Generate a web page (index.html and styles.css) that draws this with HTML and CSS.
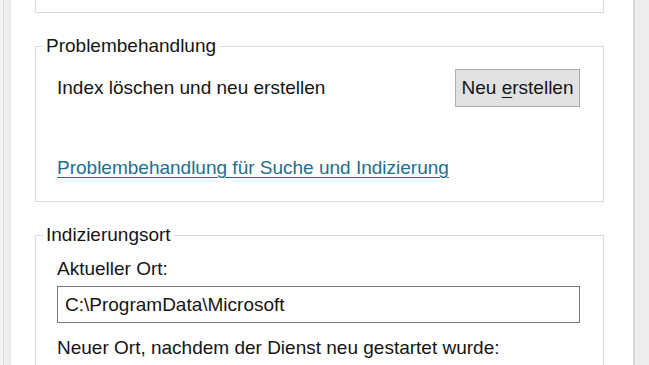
FILE: index.html
```html
<!DOCTYPE html>
<html lang="de">
<head>
  <meta charset="UTF-8">
  <title>Erweiterte Optionen</title>
  <link rel="stylesheet" href="styles.css">
</head>
<body>
  <div class="window">
    <div class="frame-left"></div>

    <main class="panel">
      <!-- oberer Gruppenrahmen, nur unterer Teil sichtbar -->
      <div class="group-top"></div>

      <fieldset class="group">
        <legend>Problembehandlung</legend>
        <div class="row">
          <span>Index löschen und neu erstellen</span>
          <button class="btn">Neu <u>e</u>rstellen</button>
        </div>
        <a class="link" href="#">Problembehandlung für Suche und Indizierung</a>
      </fieldset>

      <fieldset class="group">
        <legend>Indizierungsort</legend>
        <div class="label first">Aktueller Ort:</div>
        <div class="textbox">C:\ProgramData\Microsoft</div>
        <div class="label">Neuer Ort, nachdem der Dienst neu gestartet wurde:</div>
        <div class="textbox"></div>
      </fieldset>
    </main>

    <div class="frame-right"></div>
  </div>
</body>
</html>
```

FILE: styles.css
```css
body {
  margin: 0;
  font-family: "Liberation Sans", Arial, sans-serif;
  font-size: 19px;
  color: #151515;
  background: #fff;
  overflow: hidden;
}

.window {
  display: flex;
  height: 365px;
}

.frame-left {
  width: 11px;
  background: #efefef;
  border-left: 3px solid #f3f3f3;
  box-shadow: inset 1px 0 0 #dadada;
  box-sizing: border-box;
  border-right: 1px solid #e4e4e4;
}

.frame-right {
  flex: 1;
  background: #ededed;
  border-left: 2px solid #d8d8d8;
}

.panel {
  width: 622px;
  padding: 0 29px 0 24px;
  box-sizing: border-box;
  background: #fff;
}

.group-top {
  height: 12px;
  border: 1px solid #dcdcdc;
  border-top: none;
}

.group {
  margin: 23px 0 0;
  padding: 0 23px 22px 21px;
  border: 1px solid #dcdcdc;
  min-width: 0;
}

.group legend {
  margin-left: -14px;
  padding: 0 3px;
  line-height: 20px;
}

.row {
  display: flex;
  justify-content: space-between;
  align-items: center;
  margin-top: 13px;
}

.btn {
  width: 125px;
  height: 38px;
  background: #e1e1e1;
  border: 1px solid #adadad;
  font: inherit;
  color: #151515;
  padding: 0;
}

.btn u {
  text-decoration-thickness: 1px;
  text-underline-offset: 3px;
}

.link {
  display: inline-block;
  margin-top: 50px;
  line-height: 22px;
  color: #1f6e8c;
  text-decoration-thickness: 1px;
  text-underline-offset: 3px;
}

.label {
  line-height: 22px;
  margin-top: 14px;
}

.label.first {
  margin-top: 13px;
}

.textbox {
  height: 35px;
  margin-top: 6px;
  border: 1px solid #7a7a7a;
  padding-left: 7px;
  line-height: 35px;
  background: #fff;
}
```
